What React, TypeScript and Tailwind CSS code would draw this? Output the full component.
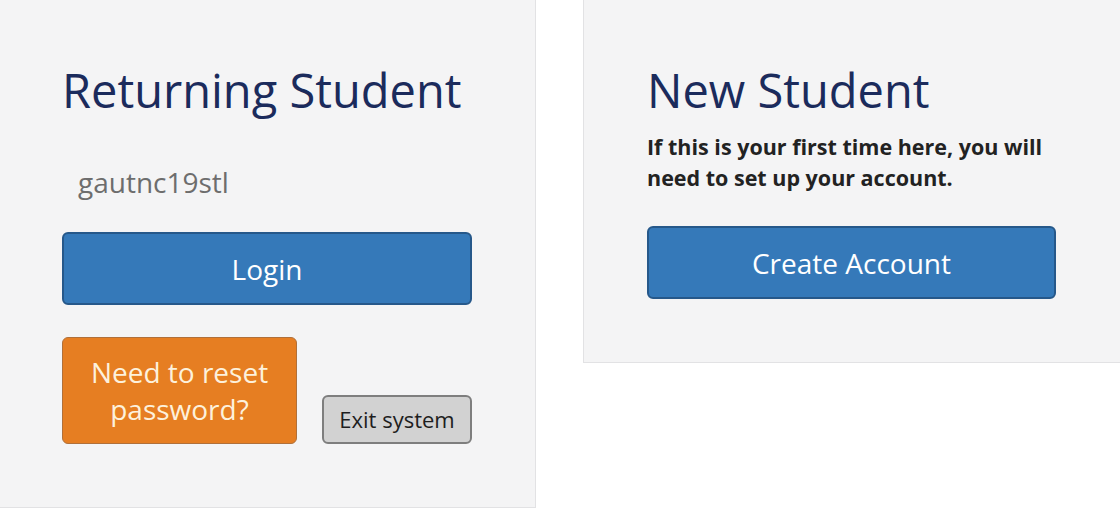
import React from 'react'

const font = { fontFamily: '"Open Sans", "Noto Sans", sans-serif' }

function ReturningStudent() {
  return (
    <div className="w-[536px] h-[508px] shrink-0 bg-[#f4f4f5] border-r border-b border-[#e2e2e4] pl-[62px] pt-[62px]">
      <h1 className="text-[47px] leading-[56px] text-[#1b2b5c]">Returning Student</h1>
      <p className="mt-[46px] pl-4 text-[28px] leading-[37px] text-[#6d6d6d]">gautnc19stl</p>
      <button className="mt-[31px] w-[410px] h-[73px] rounded-[6px] bg-[#3579b9] border-2 border-[#26588a] text-white text-[28px]">
        Login
      </button>
      <div className="mt-[32px] flex items-end gap-[25px]">
        <button className="w-[235px] h-[107px] rounded-[6px] bg-[#e67e22] border border-[#b0703a] text-[#fdf1dc] text-[28px] leading-[37px]">
          Need to reset
          <br />
          password?
        </button>
        <button className="w-[150px] h-[49px] rounded-[6px] bg-[#d2d2d2] border-2 border-[#7e7e7e] text-[#1e1e1e] text-[22px]">
          Exit system
        </button>
      </div>
    </div>
  )
}

function NewStudent() {
  return (
    <div className="flex-1 h-[363px] bg-[#f4f4f5] border-l border-b border-[#e2e2e4] pl-[63px] pt-[62px]">
      <h1 className="text-[47px] leading-[56px] text-[#1b2b5c]">New Student</h1>
      <p className="mt-[13px] w-[410px] text-[21.5px] leading-[31px] font-bold text-[#222222]">
        If this is your first time here, you will need to set up your account.
      </p>
      <button className="mt-[33px] w-[409px] h-[73px] rounded-[6px] bg-[#3579b9] border-2 border-[#26588a] text-white text-[28px]">
        Create Account
      </button>
    </div>
  )
}

export default function App() {
  return (
    <div className="w-[1120px] h-[509px] bg-white flex gap-[47px] overflow-hidden" style={font}>
      <ReturningStudent />
      <NewStudent />
    </div>
  )
}
